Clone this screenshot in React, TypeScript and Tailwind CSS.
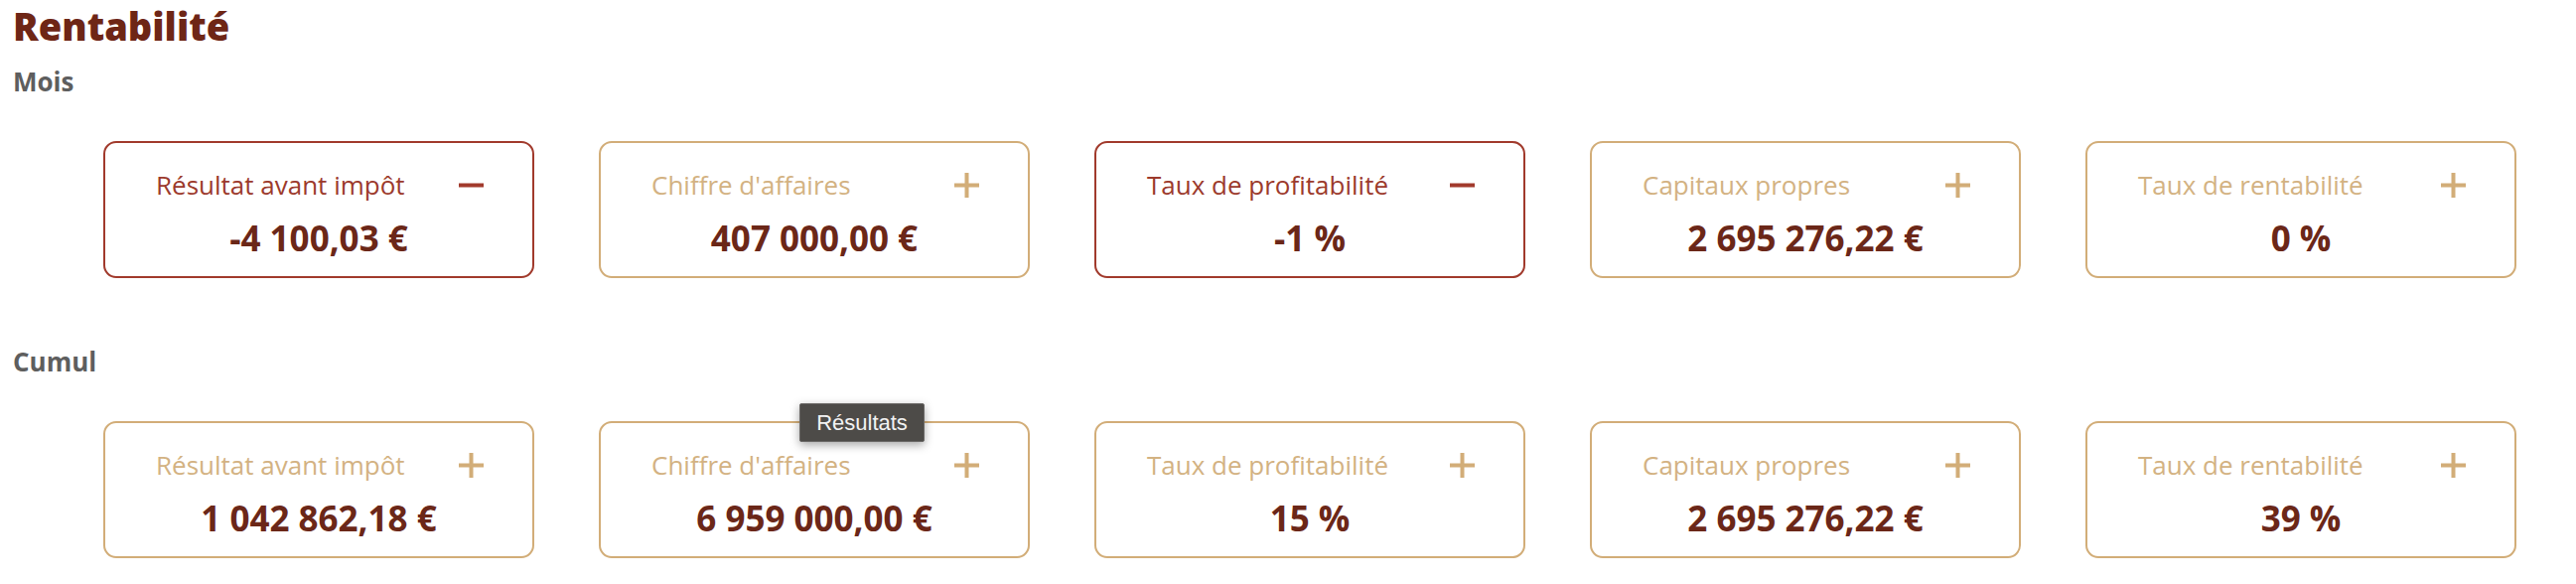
type Card = { label: string; value: string; negative?: boolean };

const mois: Card[] = [
  { label: "Résultat avant impôt", value: "-4 100,03 €", negative: true },
  { label: "Chiffre d'affaires", value: "407 000,00 €" },
  { label: "Taux de profitabilité", value: "-1 %", negative: true },
  { label: "Capitaux propres", value: "2 695 276,22 €" },
  { label: "Taux de rentabilité", value: "0 %" },
];

const cumul: Card[] = [
  { label: "Résultat avant impôt", value: "1 042 862,18 €" },
  { label: "Chiffre d'affaires", value: "6 959 000,00 €" },
  { label: "Taux de profitabilité", value: "15 %" },
  { label: "Capitaux propres", value: "2 695 276,22 €" },
  { label: "Taux de rentabilité", value: "39 %" },
];

function Sign({ negative }: { negative?: boolean }) {
  if (negative) {
    return (
      <svg width="25" height="25" viewBox="0 0 25 25" className="shrink-0">
        <rect x="0" y="10.5" width="25" height="4" fill="#a13a2c" />
      </svg>
    );
  }
  return (
    <svg width="25" height="25" viewBox="0 0 25 25" className="shrink-0">
      <rect x="0" y="10.5" width="25" height="4" fill="#d2ad78" />
      <rect x="10.5" y="0" width="4" height="25" fill="#d2ad78" />
    </svg>
  );
}

function KpiCard({ card }: { card: Card }) {
  return (
    <div
      className={
        card.negative
          ? "w-[434px] h-[138px] rounded-[13px] border-2 border-[#a13a2c] bg-white pt-[24px]"
          : "w-[434px] h-[138px] rounded-[13px] border-2 border-[#d2ad78] bg-white pt-[24px]"
      }
    >
      <div className="flex items-center justify-between pl-[51px] pr-[49px]">
        <span
          className={
            card.negative
              ? "text-[26px] leading-[36px] text-[#9c3a2c]"
              : "text-[26px] leading-[36px] text-[#d3b282]"
          }
        >
          {card.label}
        </span>
        <Sign negative={card.negative} />
      </div>
      <p className="mt-[12px] text-center text-[35px] leading-[48px] font-bold text-[#6b2718]">
        {card.value}
      </p>
    </div>
  );
}

function Row({ cards }: { cards: Card[] }) {
  return (
    <div className="flex gap-x-[65px] pl-[91px]">
      {cards.map((c, i) => (
        <KpiCard key={i} card={c} />
      ))}
    </div>
  );
}

export default function App() {
  return (
    <div className="w-[2594px] h-[588px] bg-white font-['Open_Sans',sans-serif] px-[13px] pt-[4px]">
      <h1 className="text-[38px] leading-[44px] font-extrabold text-[#6e2616]">Rentabilité</h1>
      <h2 className="mt-[18px] text-[26px] leading-[32px] font-bold text-[#5e5e5e]">Mois</h2>
      <div className="mt-[44px]">
        <Row cards={mois} />
      </div>
      <h2 className="mt-[68px] text-[26px] leading-[32px] font-bold text-[#5e5e5e]">Cumul</h2>
      <div className="relative mt-[44px]">
        <Row cards={cumul} />
        {/* tooltip hovering over the second card */}
        <div className="absolute left-[792px] top-[-18px] w-[126px] h-[39px] flex items-center justify-center bg-[#4d4b48] border border-[#6a6866] rounded-[2px] shadow-[0_3px_10px_rgba(0,0,0,0.35)] text-[22px] text-[#f2f2f2] font-['Liberation_Sans',sans-serif]">
          Résultats
        </div>
      </div>
    </div>
  );
}
